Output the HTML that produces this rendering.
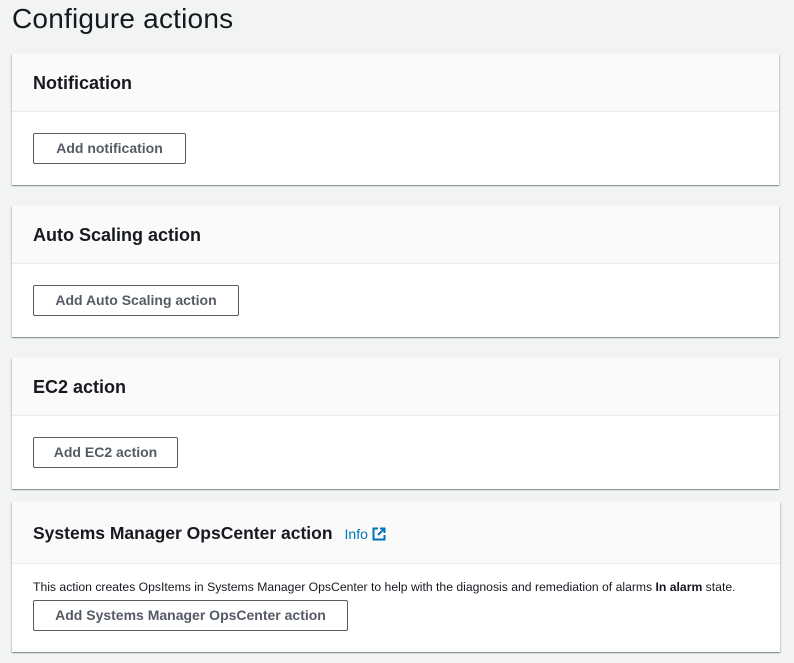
<!DOCTYPE html>
<html><head><style>
body{margin:0;background:#f2f3f3;font-family:"Liberation Sans",sans-serif;width:794px;height:663px;overflow:hidden;position:relative;color:#16191f}
h1{position:absolute;left:12px;top:0;margin:0;font-size:28px;font-weight:400;line-height:38px;color:#16191f;letter-spacing:0.2px}
.card{position:absolute;left:12px;width:767px;background:#fff;box-shadow:0 1px 1px 0 rgba(0,28,36,.3),1px 1px 1px 0 rgba(0,28,36,.15),-1px 1px 1px 0 rgba(0,28,36,.15)}
.hd{height:58px;background:#fafafa;border-bottom:1px solid #eaeded;box-sizing:border-box;padding-left:21px;font-size:18px;font-weight:700;line-height:58px}
.btn{position:absolute;left:21px;height:31px;border:1px solid #545b64;border-radius:2px;box-sizing:border-box;font-size:14px;font-weight:700;color:#545b64;line-height:29px;text-align:center;background:#fff}
.info{color:#0073bb;font-size:14px;font-weight:400;margin-left:12px}
</style></head><body>
<h1>Configure actions</h1>
<div class="card" style="top:54px;height:131px"><div class="hd">Notification</div><div class="btn" style="top:79px;width:153px">Add notification</div></div>
<div class="card" style="top:206px;height:131px"><div class="hd">Auto Scaling action</div><div class="btn" style="top:79px;width:206px">Add Auto Scaling action</div></div>
<div class="card" style="top:358px;height:131px"><div class="hd">EC2 action</div><div class="btn" style="top:79px;width:145px">Add EC2 action</div></div>
<div class="card" style="top:502px;height:150px;width:768px"><div class="hd" style="height:62px;line-height:62px;font-size:17.5px">Systems Manager OpsCenter action<span class="info">Info <svg width="14" height="14" viewBox="0 0 14 14" style="vertical-align:-2px"><path d="M6 1.5H1.5v11h11V8" fill="none" stroke="#0073bb" stroke-width="2"/><path d="M8 1.5h4.5V6M12.5 1.5L6 8" fill="none" stroke="#0073bb" stroke-width="2"/></svg></span></div>
<div style="position:absolute;left:21px;top:78px;font-size:12.2px;color:#16191f;white-space:nowrap">This action creates OpsItems in Systems Manager OpsCenter to help with the diagnosis and remediation of alarms <b>In alarm</b> state.</div>
<div class="btn" style="top:98px;width:315px">Add Systems Manager OpsCenter action</div></div>
</body></html>
